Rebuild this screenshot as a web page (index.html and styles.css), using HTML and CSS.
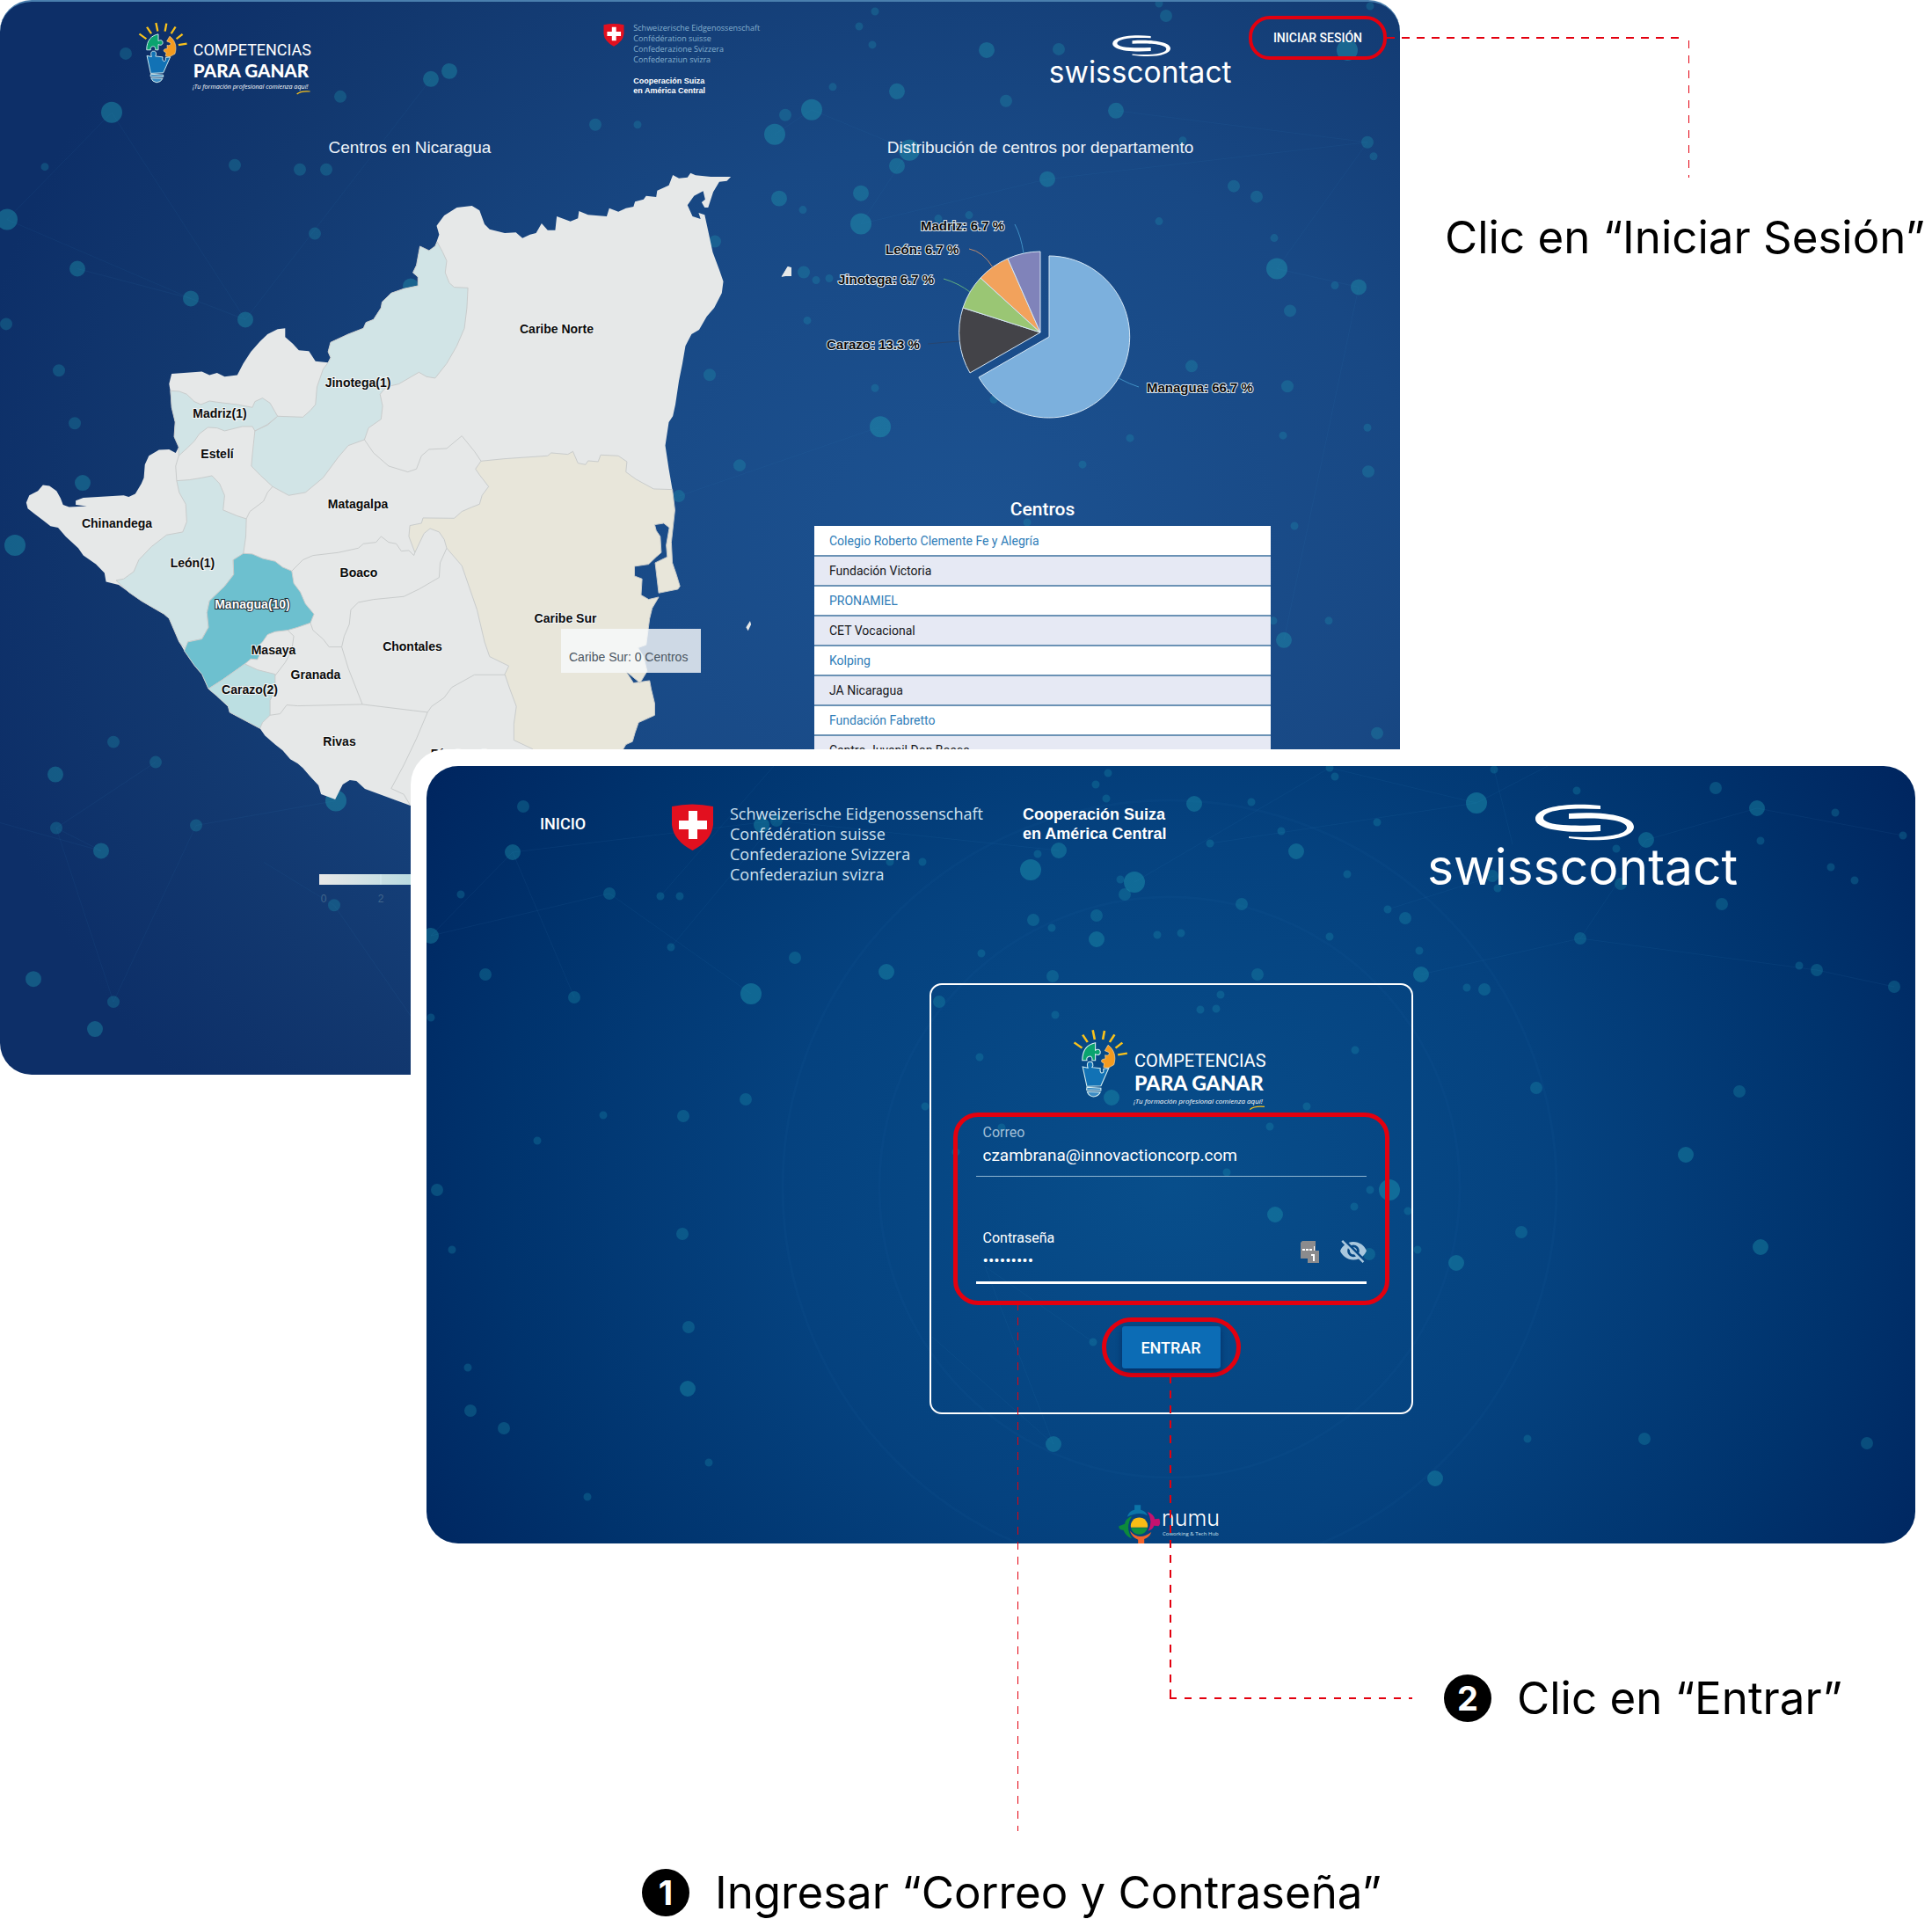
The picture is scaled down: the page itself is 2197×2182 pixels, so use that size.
FILE: index.html
```html
<!DOCTYPE html>
<html lang="es">
<head>
<meta charset="utf-8">
<meta name="viewport" content="width=device-width, initial-scale=1">
<title>Competencias para Ganar: iniciar sesión</title>
<link rel="stylesheet" href="styles.css">
</head>
<body>
<svg class="symbols" aria-hidden="true">
  <symbol id="logo-cpg" viewBox="1218 1170 226 97">
    <g transform="translate(1040 1100) scale(.37 .3333)">
      <path d="M488 262L512 281M514 236L529 261M545 220L551 252M581 222L576 252M612 235L597 261M636 263L615 281M651 299L622 304" stroke="#f9c21b" stroke-width="7" fill="none"/>
      <path d="M553 263C530 268 513 285 513 323H527C522 308 546 302 543 323H553V302C562 308 570 302 568 293C566 284 558 285 553 289Z" fill="#0aa36f" stroke="#d5eef0" stroke-width="3"/>
      <path d="M592 271C610 285 618 310 610 338L592 349L578 347L580 333C568 330 568 318 584 318L583 305C590 308 597 305 595 296L582 290Z" fill="#f39a1f" stroke="#fbd9a0" stroke-width="2"/>
      <path d="M514 345L530 349C525 335 530 326 537 328C545 326 548 340 543 347L568 350C566 365 572 370 578 363V352L594 350L570 410L527 412Z" fill="#1272b5" stroke="#d5eef0" stroke-width="3"/>
      <path d="M527 415L570 418V426L526 424ZM528 430L568 432Q562 446 547 447Q532 444 528 430Z" fill="#3d8cc4" stroke="#d5eef0" stroke-width="3"/>
      <path d="M1028 491Q1040 478 1073 481" stroke="#f9c21b" stroke-width="4" fill="none"/>
    </g>
    <text class="logo-line-a" x="1289" y="1215">COMPETENCIAS</text>
    <text class="logo-line-b" x="1289" y="1242">PARA GANAR</text>
    <text class="logo-line-c" x="1288" y="1257">¡Tu formación profesional comienza aquí!</text>
  </symbol>
  <symbol id="shield" viewBox="0 0 49 54">
    <path d="M1 3Q24 -2 48 3V24Q46 42 24.500 53Q3 42 1 24Z" fill="#e2101f"/>
    <path d="M20 8h10v11h11v10h-11v11h-10v-11h-11v-10h11Z" fill="#fff"/>
  </symbol>
  <symbol id="logo-swisscontact" viewBox="1622 912 358 102">
    <path d="M1820 917C1780 913 1746 919 1746 932C1746 944 1780 949 1820 946V939C1785 941 1755 939 1755 931C1755 922 1785 919 1820 921Z" fill="#fff"/>
    <path d="M1784 926C1824 923 1858 929 1858 941C1858 954 1824 960 1784 954V952C1819 955 1850 951 1850 942C1850 933 1819 930 1784 932Z" fill="#fff"/>
    <text class="wordmark" x="1623" y="1007">swisscontact</text>
  </symbol>
</svg>

<main class="board">
  <section class="window portal" aria-label="Portal">
    <svg class="backdrop" viewBox="0 0 1592 1222" preserveAspectRatio="none" aria-hidden="true">
      <path class="web" d="M8 248L127 126L279 362M8 248L217 338L88 304M217 338L279 362L490 88M0 935L115 967L64 941L177 866M129 1139L223 938L382 910M129 1139L64 941M881 151L923 123L1034 169L979 253L1191 202L1555 160M1269 124L1555 160L1452 304L1545 325M1545 325L1460 727M1001 484L772 563M300 980L380 1029L467 1155"/>
      <path class="dot s8" d="M51 188h0M725 140h0M992 49h0M977 28h0M995 11h0M947 97h0M913 237h0M943 315h0M928 317h0M918 363h0M995 440h0M1067 247h0M1102 243h0M1345 158h0M1318 250h0M1449 269h0M1518 323h0M1130 453h0M1285 497h0M1459 494h0M1555 485h0M1231 527h0M1472 597h0M1511 705h0M1448 705h0M1168 593h0M1558 5h0M1562 176h0M1318 2h0"/>
      <path class="dot s13" d="M143 59h0M7 367h0M67 420h0M85 480h0M358 264h0M267 186h0M341 191h0M371 191h0M387 108h0M677 140h0M893 129h0M807 425h0M813 273h0M1204 54h0M1326 16h0M1144 113h0M914 308h0M1403 210h0M1429 222h0M1467 352h0M1355 415h0M1464 438h0M1556 535h0M1566 833h0M772 563h0M841 528h0M129 843h0M177 866h0M64 941h0M223 938h0M380 1029h0M129 1139h0M1555 160h0"/>
      <path class="dot s17" d="M88 304h0M217 338h0M279 362h0M490 88h0M511 79h0M886 224h0M1122 55h0M1020 102h0M1020 187h0M979 218h0M1269 124h0M1191 202h0M1545 325h0M94 548h0M467 324h0M63 880h0M115 967h0M38 1113h0M108 1170h0M1460 727h0"/>
      <path class="dot s24" d="M127 126h0M8 248h0M881 151h0M923 123h0M1034 169h0M979 253h0M1452 304h0M1001 484h0M17 619h0M382 910h0M1532 55h0"/>
    </svg>
    <header class="portal-header">
      <svg class="portal-logo" role="img" aria-label="Competencias para Ganar"><use href="#logo-cpg"/></svg>
      <div class="swiss swiss-small">
        <svg class="shield" aria-hidden="true"><use href="#shield"/></svg>
        <div class="swiss-text">
          <p class="confed">Schweizerische Eidgenossenschaft<br>Confédération suisse<br>Confederazione Svizzera<br>Confederaziun svizra</p>
          <p class="coop">Cooperación Suiza<br>en América Central</p>
        </div>
      </div>
      <svg class="portal-contact" role="img" aria-label="swisscontact"><use href="#logo-swisscontact"/></svg>
      <a class="signin" href="#acceso">INICIAR SESIÓN</a>
    </header>
    <div class="portal-body">
      <section class="map">
        <h2>Centros en Nicaragua</h2>
        <svg class="map-art" viewBox="0 190 900 1032" role="img" aria-label="Mapa de centros en Nicaragua">
          <defs>
            <linearGradient id="scale"><stop offset="0" stop-color="#e8e8e8"/><stop offset=".45" stop-color="#a6d6de"/><stop offset="1" stop-color="#3eb0c4"/></linearGradient>
          </defs>
          <g class="land" transform="scale(.574 .3333)">
            <path class="none" d="M340 1275L400 1268L415 1280L430 1272L445 1285L470 1280L482 1240L497 1200L515 1165L530 1140L550 1123L565 1120V1150L580 1172L592 1195L612 1198L625 1232L650 1237L655 1220L650 1200L655 1168L690 1140L720 1120L725 1100L740 1090L755 1050L757 1030L775 1000L800 985L828 975V945L818 930L825 905L832 840L850 855L862 840L866 820L870 800L865 770L880 735L905 708L935 702L950 718L960 765L970 782L1000 795L1022 793L1035 812L1050 800L1062 795L1073 762L1085 785H1100L1103 738L1130 755L1145 745L1147 720L1165 733L1202 738L1207 710L1225 722L1240 710L1255 705L1258 688L1275 680L1280 668L1300 672L1302 650L1325 632L1333 597L1345 608L1362 605L1368 590L1378 598L1408 603L1448 603L1440 617L1425 620L1413 655L1403 708H1396L1390 690L1397 680L1393 652L1375 668L1362 700L1372 738L1388 747L1384 726L1396 733L1402 780L1412 860L1425 920L1433 960L1430 1000L1415 1050L1400 1080L1385 1125L1370 1140L1358 1180L1352 1240L1345 1300L1338 1380L1333 1420L1325 1440L1318 1520L1325 1600L1332 1670L1200 1800V2560L1000 2700L813 2748L723 2691L706 2664L693 2661L679 2676L664 2727L636 2709L631 2679L615 2650L600 2620L590 2605L575 2590L560 2560L545 2540L525 2510L515 2485L455 2430L452 2410L430 2375L413 2350L400 2300L385 2270L365 2220L355 2190L345 2150L335 2110L325 2095L300 2070L280 2050L255 2020L235 1995L210 1985L207 1955L190 1925L165 1895L155 1870L130 1830L115 1800L100 1795L85 1775L70 1755L55 1735L52 1715L58 1690L75 1675L85 1655L98 1658L112 1675L120 1700L125 1722L137 1730L172 1727L150 1722V1708L165 1698L245 1690L255 1695L268 1685L280 1650L285 1630L287 1585L295 1555L315 1535L335 1533L348 1545L354 1525L345 1490L347 1440L340 1390L337 1330L335 1310Z"/>
            <path class="hover" d="M953 1573L1000 1565L1085 1555L1092 1545L1125 1550L1135 1540L1145 1580L1160 1585L1165 1572L1185 1575L1190 1552L1225 1555L1242 1575L1240 1610L1260 1635L1295 1668L1332 1670L1337 1740L1330 1850L1332 1920L1340 1960L1347 2000L1343 2010L1305 2023L1298 1920L1322 1900L1320 1860L1326 1800L1315 1785L1297 1790L1300 1810L1308 1830L1310 1885L1300 1900L1285 1925L1257 1932V1965L1272 1975L1270 2030L1285 2045L1305 2037L1292 2075L1287 2110L1280 2200L1264 2210L1275 2240L1282 2290L1268 2330L1240 2290L1255 2330L1287 2322L1290 2350L1297 2400V2440L1265 2465L1258 2500L1253 2530L1240 2540L1235 2555L1200 2640H1100L1055 2555L1018 2525V2470L1023 2410L1010 2350L1000 2300L1008 2272L970 2240L960 2190L945 2080L925 1980L915 1930L885 1870L880 1840L870 1815L852 1803L840 1820L822 1885L810 1830L812 1793L835 1785L838 1767L900 1768L915 1745L935 1730L950 1720L955 1690L968 1660L950 1620L942 1600Z"/>
            <path class="one" d="M866 825L877 860L885 890L882 930L890 965L900 980L927 982L925 1050L920 1120L905 1180L885 1240L862 1290L845 1285L830 1270L815 1285L790 1310L765 1320L753 1345L758 1385L755 1430L730 1460L722 1500L690 1520L670 1560L640 1630L605 1680L572 1690L540 1660L515 1620L498 1590L500 1550L505 1470L530 1450L550 1420L600 1423L615 1400L625 1380L628 1320L640 1260L650 1237L655 1220L650 1200L655 1168L690 1140L720 1120L725 1100L740 1090L755 1050L757 1030L775 1000L800 985L828 975V945L818 930L825 905L832 840L850 855L862 840Z"/>
            <path class="one" d="M338 1333L355 1335L370 1345L385 1370L398 1380L415 1368L430 1372L470 1380L500 1390L505 1370L520 1358L535 1375L545 1405L550 1420L530 1448L505 1470L500 1455H480L445 1470L430 1460L412 1458L395 1480L385 1505L370 1530L354 1555V1525L345 1490L347 1440L340 1390Z"/>
            <path class="one" d="M350 1640L375 1637L400 1630L420 1623L435 1650L445 1690L442 1740L470 1760L488 1770L487 1830L482 1890L462 1910L463 1960L445 2000L415 2050L410 2090L413 2140L400 2180L372 2190L370 2220L355 2190L345 2150L335 2110L325 2095L300 2070L280 2050L255 2020L230 1980L245 1975L265 1950L275 1910L300 1865L330 1825L362 1815L370 1780L368 1720L355 1680Z"/>
            <path class="ten" d="M482 1888L500 1890L520 1905L545 1915L560 1935L578 1948L582 1990L595 2020L605 2060L622 2095L615 2125L590 2140L570 2150L545 2155L530 2165L520 2190L505 2215L514 2235L510 2250L497 2248L485 2265L465 2290L440 2320L413 2350L400 2300L385 2270L365 2220L372 2190L400 2180L413 2140L410 2090L415 2050L445 2000L463 1960L462 1910Z"/>
            <path class="two" d="M485 2265L510 2285L545 2300V2350L535 2390V2440L520 2465L515 2485L455 2430L452 2410L430 2375L413 2350L440 2320Z"/>
            <path class="border" d="M722 1500L740 1545L770 1590L808 1610L825 1600L835 1555L850 1533L885 1530L915 1487L940 1540L953 1573M354 1555L348 1590L350 1640M488 1770L495 1745L522 1710L530 1680L540 1660M578 1948L600 1910L620 1895L670 1885L710 1870L720 1855L745 1850L755 1830L770 1850L785 1855L795 1880L810 1878L820 1895L822 1885M885 1870L872 1920L870 1970L830 2010L800 2035L740 2045L710 2055L695 2080L692 2130L682 2170L677 2207H652L640 2180L620 2150L615 2125M570 2150L582 2170L578 2220L565 2260L545 2305M677 2207L690 2280L718 2403M535 2440L555 2435L568 2405L590 2408L718 2403L847 2430L855 2410L880 2380L895 2345L940 2302H1000M847 2430L825 2520L800 2610L775 2690L800 2710L813 2748"/>
            <path class="none" d="M1548 945L1560 910L1580 915L1575 935ZM1478 2140L1486 2118L1488 2130L1482 2152Z"/>
          </g>
          <path class="islet" d="M889 314L896 303L904 306L902 314Z"/>
          <g class="map-label">
            <text x="633" y="379">Caribe Norte</text>
            <text x="407" y="440">Jinotega(1)</text>
            <text x="250" y="475">Madriz(1)</text>
            <text x="247" y="521">Estelí</text>
            <text x="133" y="600">Chinandega</text>
            <text x="219" y="645">León(1)</text>
            <text x="407" y="578">Matagalpa</text>
            <text x="408" y="656">Boaco</text>
            <text class="inverse" x="287" y="692">Managua(10)</text>
            <text x="311" y="744">Masaya</text>
            <text x="359" y="772">Granada</text>
            <text x="284" y="789">Carazo(2)</text>
            <text x="469" y="740">Chontales</text>
            <text x="643" y="708">Caribe Sur</text>
            <text x="386" y="848">Rivas</text>
            <text x="534" y="862">Río San Juan</text>
          </g>
          <rect class="tip" x="638" y="715" width="159" height="50"/>
          <text class="tip-text" x="647" y="752">Caribe Sur: 0 Centros</text>
          <rect x="363" y="994" width="330" height="12" fill="url(#scale)"/>
          <path d="M433 994v12" stroke="#d8eef2"/>
          <g class="ticks"><text x="368" y="1026">0</text><text x="433" y="1026">2</text></g>
        </svg>
      </section>
      <section class="charts">
        <h2>Distribución de centros por departamento</h2>
        <svg class="pie" viewBox="900 190 692 370" role="img" aria-label="Distribución de centros por departamento">
          <g class="slices">
            <path fill="#7cb0dd" d="M1193 383V291A92 92 0 1 1 1113 429Z"/>
            <path fill="#434348" d="M1183 378L1103 424A92 92 0 0 1 1095 350Z"/>
            <path fill="#9ac674" d="M1183 378L1095 350A92 92 0 0 1 1115 316Z"/>
            <path fill="#f2a25c" d="M1183 378L1115 316A92 92 0 0 1 1146 294Z"/>
            <path fill="#8083ba" d="M1183 378L1146 294A92 92 0 0 1 1183 286Z"/>
          </g>
          <g class="leads">
            <path stroke="#3f8fc4" d="M1154 255Q1161 268 1164 288M1272 430Q1285 437 1295 440"/>
            <path stroke="#c08b6c" d="M1102 283Q1118 286 1129 304"/>
            <path stroke="#5fae80" d="M1073 317Q1090 322 1103 332"/>
            <path stroke="#27456f" d="M1055 391Q1075 389 1091 388"/>
          </g>
          <g class="pie-label">
            <text x="1047" y="262">Madriz: 6.7 %</text>
            <text x="1007" y="289">León: 6.7 %</text>
            <text x="953" y="323">Jinotega: 6.7 %</text>
            <text x="940" y="397">Carazo: 13.3 %</text>
            <text x="1304" y="446">Managua: 66.7 %</text>
          </g>
        </svg>
        <table class="centers">
          <caption>Centros</caption>
          <tbody>
            <tr><td>Colegio Roberto Clemente Fe y Alegría</td></tr>
            <tr><td>Fundación Victoria</td></tr>
            <tr><td>PRONAMIEL</td></tr>
            <tr><td>CET Vocacional</td></tr>
            <tr><td>Kolping</td></tr>
            <tr><td>JA Nicaragua</td></tr>
            <tr><td>Fundación Fabretto</td></tr>
            <tr><td>Centro Juvenil Don Bosco</td></tr>
          </tbody>
        </table>
      </section>
    </div>
  </section>

  <p class="note note-signin">Clic en “Iniciar Sesión”</p>

  <div class="login-frame" id="acceso">
    <section class="window login" aria-label="Acceso">
      <svg class="backdrop" viewBox="485 871 1693 884" preserveAspectRatio="none" aria-hidden="true">
        <path class="web" d="M490 1064L583 969L653 1134M490 1064L693 1016L854 1130M583 969L883 933L1204 967M751 1019L880 871M1290 1003L1512 873L1679 913L1760 871M1679 913L1376 959M1872 955L1998 919L2164 950M1872 955L1797 1067L2066 1103L2154 1122M1797 1067L1616 1108M1699 875L1720 960M1578 1034L1699 996M763 1077L883 933M1198 1642L1060 1520M1198 1642L1120 1440L1243 1526"/>
        <circle class="halo" cx="1330" cy="1350" r="440"/><circle class="halo" cx="1330" cy="1350" r="330"/>
        <path class="dot s8" d="M524 1017h0M751 1019h0M773 1019h0M763 1077h0M1012 980h0M1049 980h0M1116 1084h0M1180 971h0M1274 1000h0M1260 879h0M1246 892h0M1258 908h0M1196 1055h0M1316 1063h0M1343 1061h0M1512 873h0M1518 883h0M1423 912h0M1699 875h0M1793 899h0M2087 924h0M2164 950h0M2002 956h0M1838 965h0M1566 935h0M1457 945h0M1376 959h0M1532 994h0M1703 1010h0M2082 986h0M2109 1001h0M1578 1034h0M1512 1065h0M2046 1098h0M1614 1081h0M1668 1123h0M1388 1131h0M1200 1154h0M1365 1148h0M1383 1147h0M1114 1202h0M1052 1258h0M1541 1194h0M1486 1258h0M1444 1281h0M1139 1282h0M1395 1333h0M1087 1310h0M1558 1353h0M1540 1372h0M1601 1377h0M1243 1526h0M1612 1421h0M514 1421h0M668 1702h0M686 1268h0M532 1555h0M490 1157h0M806 1663h0M1737 1636h0M611 1297h0"/>
        <path class="dot s13" d="M595 917h0M693 1016h0M904 1089h0M552 1108h0M653 1134h0M883 933h0M1279 1017h0M1247 1041h0M1175 1046h0M1197 1110h0M1951 896h0M1697 996h0M1843 1005h0M1958 1028h0M1598 1044h0M2066 1103h0M2154 1122h0M1430 1108h0M1688 1125h0M1068 1139h0M1557 1426h0M497 1353h0M776 1403h0M783 1509h0M535 1604h0M573 1624h0M1978 1241h0M1747 1237h0M1730 1401h0M1870 1636h0M2123 1641h0M848 1250h0M777 1269h0M1797 1067h0M1412 1028h0"/>
        <path class="dot s17" d="M583 969h0M866 938h0M490 1064h0M1204 967h0M1247 1068h0M1358 914h0M1872 955h0M1998 919h0M1474 968h0M1616 1108h0M1198 1642h0M782 1579h0M1917 1313h0M1632 1681h0M1656 1436h0M2002 1418h0M1008 1105h0M1264 1248h0M1450 1381h0"/>
        <path class="dot s24" d="M854 1130h0M1172 989h0M1290 1003h0M1679 913h0M1580 1353h0"/>
      </svg>
      <header class="login-header">
        <a class="home" href="#">INICIO</a>
        <div class="swiss swiss-large">
          <svg class="shield" aria-hidden="true"><use href="#shield"/></svg>
          <p class="confed">Schweizerische Eidgenossenschaft<br>Confédération suisse<br>Confederazione Svizzera<br>Confederaziun svizra</p>
        </div>
        <p class="coop coop-large">Cooperación Suiza<br>en América Central</p>
        <svg class="login-contact" role="img" aria-label="swisscontact"><use href="#logo-swisscontact"/></svg>
      </header>
      <form class="card">
        <svg class="card-logo" role="img" aria-label="Competencias para Ganar"><use href="#logo-cpg"/></svg>
        <div class="fields">
          <div class="field">
            <label for="correo">Correo</label>
            <input id="correo" type="email" value="czambrana@innovactioncorp.com">
          </div>
          <div class="field active">
            <label for="clave">Contraseña</label>
            <input id="clave" type="password" value="contrasen">
            <svg class="key" viewBox="0 0 21 25" aria-hidden="true">
              <path fill="#8b8b8d" d="M2 0h15v11h4v14H8v-5H0V2Z"/>
              <path fill="#fff" d="M2 9h3v2H2zM6 9h3v2H6zM10 9h3v2h-3zM15 6h1v5h-1zM12 15h4v8h-2v-6h-2z"/>
            </svg>
            <button class="reveal" type="button" aria-label="Mostrar contraseña">
              <svg viewBox="1 3 22 19"><path fill="currentColor" d="M12 7c2.760 0 5 2.240 5 5 0 .65-.13 1.260-.36 1.830l2.920 2.920c1.510-1.260 2.700-2.890 3.430-4.750-1.730-4.390-6-7.500-11-7.500-1.400 0-2.740.25-3.980.7l2.160 2.160C10.740 7.130 11.350 7 12 7zM2 4.270l2.280 2.280.46.46C3.080 8.300 1.780 10.020 1 12c1.730 4.390 6 7.500 11 7.500 1.550 0 3.030-.3 4.380-.84l.42.42L19.730 22 21 20.730 3.270 3 2 4.270zM7.530 9.800l1.550 1.550c-.05.21-.08.43-.08.65 0 1.660 1.340 3 3 3 .22 0 .44-.03.65-.08l1.550 1.550c-.67.33-1.410.53-2.200.53-2.760 0-5-2.240-5-5 0-.79.2-1.530.53-2.200zm4.310-.78l3.150 3.150.02-.16c0-1.660-1.340-3-3-3l-.17.01z"/></svg>
            </button>
          </div>
        </div>
        <div class="ring"><button class="enter" type="submit">ENTRAR</button></div>
      </form>
      <footer class="login-footer">
        <svg class="numu" viewBox="1270 1709 124 46" role="img" aria-label="numu">
          <g transform="translate(1040 1370) scale(.37 .3333)">
            <path d="M665 1100A26 28 0 1 1 716 1100Z" fill="#f9bd15"/>
            <path d="M665 1102H716A26 28 0 0 1 665 1102Z" fill="#11913c"/>
            <path d="M676 1024H695V1040Q712 1045 716 1060Q690 1045 654 1064Q658 1044 676 1040Z" fill="#0b75a8"/>
            <path d="M716 1047Q736 1055 738 1072L752 1070Q758 1086 750 1096L736 1094Q732 1108 718 1112Q734 1080 716 1047Z" fill="#c5126f"/>
            <path d="M668 1062Q648 1070 646 1088L628 1096Q626 1108 642 1110Q650 1132 668 1138Q646 1100 668 1062Z" fill="#0c8a3c"/>
            <path d="M662 1112Q690 1148 728 1116Q722 1134 706 1140V1160H687V1142Q668 1134 662 1112Z" fill="#f0642c"/>
          </g>
          <text class="numu-name" x="1321" y="1735">numu</text>
          <text class="numu-tag" x="1322" y="1746">Coworking &amp; Tech Hub</text>
        </svg>
      </footer>
    </section>
  </div>

  <p class="note note-enter"><span class="step">2</span>Clic en “Entrar”</p>
  <p class="note note-fields"><span class="step">1</span>Ingresar “Correo y Contraseña”</p>

  <svg class="connectors" viewBox="0 0 2197 2182" preserveAspectRatio="none" aria-hidden="true">
    <path d="M1577 43H1917" stroke-dasharray="9 8"/>
    <path class="thin" d="M1920.500 46V202" stroke-dasharray="9 8"/>
    <path class="thin" d="M1157.500 1481V2082" stroke-dasharray="9 8"/>
    <path d="M1331 1564V1931" stroke-dasharray="9 8"/>
    <path d="M1330 1931H1606" stroke-dasharray="8 9"/>
  </svg>
</main>
</body>
</html>
```
FILE: styles.css
```css
* { box-sizing: border-box; }
body { margin: 0; background: #fff; font-family: Roboto, sans-serif; color: #000; }
p, h2 { margin: 0; }
a { text-decoration: none; }
.symbols { display: block; width: 0; height: 0; }

.board {
  position: relative;
  display: grid;
  grid-template-columns: 467fr 1125fr 605fr;
  grid-template-rows: 852px auto auto auto;
}
.window { position: relative; overflow: hidden; border-radius: 36px; }
.backdrop { position: absolute; inset: 0; width: 100%; height: 100%; }
.window > :not(.backdrop) { position: relative; }
.web { fill: none; stroke: #3f8fc4; stroke-opacity: .09; }
.halo { fill: none; stroke: #2f7fb4; stroke-opacity: .06; stroke-width: 3; }
.dot { fill: none; stroke: #1f9db4; stroke-linecap: round; }
.s8 { stroke-width: 9; stroke-opacity: .27; }
.s13 { stroke-width: 14; stroke-opacity: .29; }
.s17 { stroke-width: 18; stroke-opacity: .38; }
.s24 { stroke-width: 24; stroke-opacity: .44; }

/* logos */
.logo-line-a { font: 400 20px Roboto, sans-serif; fill: #fff; }
.logo-line-b { font: 900 23px Lato, sans-serif; fill: #fff; }
.logo-line-c { font: italic 400 8px "Open Sans", sans-serif; fill: #fff; }
.wordmark { font: 400 57px Inter, sans-serif; fill: #fff; }
.swiss { display: flex; align-items: flex-start; }
.confed { font-family: "Open Sans", sans-serif; color: #cfe2ef; }
.coop { font-family: "Liberation Sans", sans-serif; font-weight: 700; color: #fff; }
.swiss-small { gap: 10px; }
.swiss-small .shield { width: 24px; height: 28px; }
.swiss-small .confed { font-size: 9px; line-height: 12px; color: #86b1cf; }
.swiss-small .coop { margin-top: 13px; font-size: 9px; line-height: 11px; }
.swiss-large { gap: 18px; }
.swiss-large .shield { width: 49px; height: 54px; }
.swiss-large .confed { font-size: 18px; line-height: 23px; }
.coop-large { font-size: 18px; line-height: 22px; }

/* portal */
.portal {
  grid-area: 1 / 1 / 3 / 3;
  align-self: start;
  border-top: 2px solid #4a7fae;
  background: radial-gradient(ellipse 1150px 1000px at 69% 50%, #1c5291 0, #184884 45%, #12386f 80%, #0d2f68 100%);
}
.portal-header {
  display: grid;
  grid-template-columns: 530fr 505fr 228fr 157fr;
  align-items: start;
  height: 148px;
  padding: 16px 15px 0 156px;
}
.portal-logo { width: 203px; height: 87px; margin-top: 5px; }
.swiss-small { margin-top: 8px; }
.portal-contact { width: 211px; height: 60px; margin-top: 20px; }
.signin {
  display: flex; align-items: center; justify-content: center;
  height: 50px;
  border: 4px solid #e3000f; border-radius: 24px;
  color: #fff; font-size: 14px; font-weight: 500; white-space: nowrap;
}
.portal-body { display: grid; grid-template-columns: 900fr 692fr; }
.portal h2 { height: 40px; text-align: center; color: #eef4fa; font: 400 19px/36px "Liberation Sans", sans-serif; }
.map h2 { padding-left: 32px; }
.charts h2 { padding-right: 126px; }
.map-art, .pie { display: block; width: 100%; }
.land path { stroke: #c9cccc; stroke-width: 1px; vector-effect: non-scaling-stroke; }
.land .none { fill: #e6e8e8; stroke: none; }
.land .one { fill: #d1e4e6; }
.land .two { fill: #bcdfe2; }
.land .ten { fill: #6dc0cf; }
.land .hover { fill: #e8e6da; }
.land .border { fill: none; }
.islet { fill: #e6e8e8; }
.map-label, .pie-label { fill: #0b0b0b; paint-order: stroke; stroke: #f2f4f4; stroke-width: 2px; }
.map-label { font: 700 14px "Liberation Sans", sans-serif; text-anchor: middle; }
.map-label .inverse { fill: #fff; stroke: #1c2b33; }
.pie-label { font: 700 15px "Liberation Sans", sans-serif; stroke: #dfe9f2; }
.tip { fill: #f7f9fa; fill-opacity: .82; }
.tip-text { font: 400 14px "Liberation Sans", sans-serif; fill: #4a5560; }
.ticks { font: 400 12px "Liberation Sans", sans-serif; fill: #41668c; text-anchor: middle; }
.slices path { stroke: #d5e6f4; stroke-width: 1px; }
.leads path { fill: none; stroke-width: 1px; }
.centers { width: 75%; margin-left: 26px; border-collapse: collapse; }
.centers caption { height: 38px; color: #fff; font-size: 21px; font-weight: 500; line-height: 39px; }
.centers td { height: 34px; padding: 0 17px; border-bottom: 2px solid #6b92b5; background: #fff; color: #2f7db8; font-size: 14px; }
.centers tr:nth-child(even) td { background: #e6e9f4; color: #16181c; }

/* login */
.login-frame {
  position: relative;
  grid-area: 2 / 2 / 3 / 4;
  padding: 19px 19px 0 18px;
  border-top-left-radius: 40px;
  background: #fff;
}
.login { background: radial-gradient(ellipse 58% 100% at 50% 54%, #084e8b 0, #05427f 45%, #00336d 78%, #002660 100%); }
.login-header {
  display: grid;
  grid-template-columns: 149px 400px 1fr 358px;
  align-items: start;
  height: 247px;
  padding: 40px 198px 0 129px;
}
.home { margin-top: 15px; color: #fff; font-size: 18px; font-weight: 500; line-height: 21px; }
.swiss-large { margin-top: 3px; }
.coop-large { margin-top: 4px; }
.login-contact { width: 358px; height: 102px; }
.card {
  display: flex; flex-direction: column; align-items: center;
  width: 550px; height: 490px;
  margin: 0 auto; padding: 48px 25px 0;
  border: 2px solid #fff; border-radius: 14px;
}
.card-logo { width: 226px; height: 97px; }
.fields {
  width: 100%; height: 219px;
  padding: 8px 21px 0;
  border: 5px solid #e3000f; border-radius: 28px;
}
.field { height: 60px; border-bottom: 1px solid #8db4d0; }
.field label { display: block; padding-left: 8px; font-size: 16px; line-height: 20px; color: #a3c0d8; }
.field input { display: block; width: 100%; height: 30px; padding: 0 8px; border: 0; outline: 0; background: none; color: #fff; font: 400 19px Roboto, sans-serif; }
.field.active {
  display: grid; grid-template: 20px 30px / 1fr 21px 30px; column-gap: 24px;
  height: 62px; margin-top: 60px; border-bottom: 3px solid #fff;
}
.field.active label { color: #fff; }
.key, .reveal { grid-row: 1 / 3; align-self: center; }
.key { grid-column: 2; width: 21px; height: 25px; }
.reveal { grid-column: 3; width: 30px; height: 26px; padding: 0; border: 0; background: none; color: #a9c8de; }
.reveal svg { display: block; width: 100%; height: 100%; }
.ring { margin-top: 14px; padding: 5px 18px; border: 5px solid #e3000f; border-radius: 34px; }
.enter { display: block; width: 112px; height: 48px; border: 0; border-radius: 3px; background: #0c6cb5; color: #fff; font: 500 18px Roboto, sans-serif; box-shadow: 0 3px 6px rgba(0, 20, 70, .5); }
.login-footer { display: flex; justify-content: center; height: 147px; padding-top: 101px; }
.numu { width: 124px; height: 46px; }
.numu-name { font: 300 25px Inter, sans-serif; fill: #fff; }
.numu-tag { font: 400 6px "Open Sans", sans-serif; fill: #cfe2ef; }

/* notes */
.note { display: flex; align-items: center; gap: 29px; font: 400 51px/60px Inter, sans-serif; white-space: nowrap; }
.note-signin { grid-area: 1 / 3; align-self: start; padding: 240px 0 0 51px; }
.note-enter { grid-area: 3 / 3; padding: 146px 0 0 50px; }
.note-fields { grid-area: 4 / 2 / 5 / 4; padding: 161px 0 0 263px; }
.step { display: flex; align-items: center; justify-content: center; width: 54px; height: 54px; border-radius: 50%; background: #000; color: #fff; font-size: 38px; font-weight: 700; }
.connectors { position: absolute; inset: 0; width: 100%; height: 100%; pointer-events: none; }
.connectors path { fill: none; stroke: #e3000f; stroke-width: 2px; }
.connectors .thin { stroke-width: 1px; }
```
